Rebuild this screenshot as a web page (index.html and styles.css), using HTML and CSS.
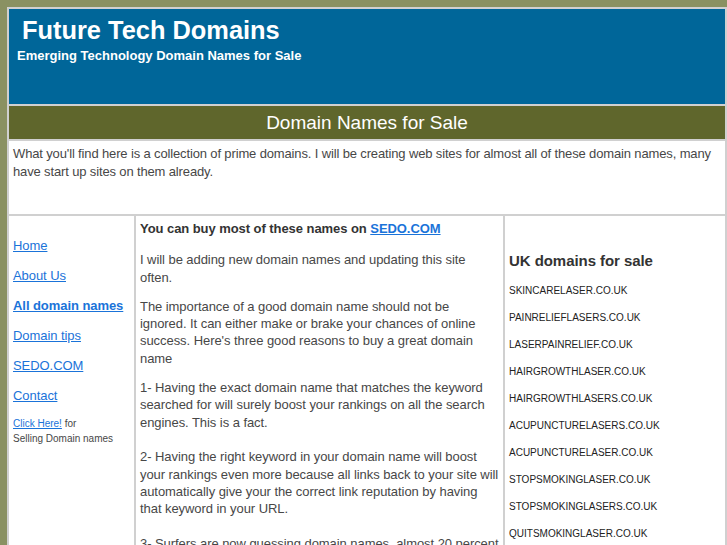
FILE: index.html
```html
<!DOCTYPE html>
<html lang="en">
<head>
    <meta charset="UTF-8">
    <title>Future Tech Domains</title>
    <link rel="stylesheet" href="styles.css">
</head>
<body>
    <div class="page">
        <div class="header">
            <h1>Future Tech Domains</h1>
            <div class="tagline">Emerging Technology Domain Names for Sale</div>
        </div>

        <div class="banner">Domain Names for Sale</div>

        <div class="intro">
            What you'll find here is a collection of prime domains. I will be creating web sites for almost all of these domain names, many have start up sites on them already.
        </div>

        <div class="columns">
            <div class="nav">
                <a href="#">Home</a>
                <a href="#">About Us</a>
                <a href="#" class="current">All domain names</a>
                <a href="#">Domain tips</a>
                <a href="#">SEDO.COM</a>
                <a href="#">Contact</a>
                <div class="small"><a href="#">Click Here!</a> for<br>Selling Domain names</div>
            </div>

            <div class="main">
                <p class="lead">You can buy most of these names on <a href="#">SEDO.COM</a></p>
                <p>I will be adding new domain names and updating this site often.</p>
                <p>The importance of a good domain name should not be ignored. It can either make or brake your chances of online success. Here's three good reasons to buy a great domain name</p>
                <p>1- Having the exact domain name that matches the keyword searched for will surely boost your rankings on all the search engines. This is a fact.<br><br>2- Having the right keyword in your domain name will boost your rankings even more because all links back to your site will automatically give your the correct link reputation by having that keyword in your URL.<br><br>3- Surfers are now guessing domain names, almost 20 percent of all traffic comes from type-in traffic.</p>
            </div>

            <div class="side">
                <h2>UK domains for sale</h2>
                <ul class="domains">
                    <li>SKINCARELASER.CO.UK</li>
                    <li>PAINRELIEFLASERS.CO.UK</li>
                    <li>LASERPAINRELIEF.CO.UK</li>
                    <li>HAIRGROWTHLASER.CO.UK</li>
                    <li>HAIRGROWTHLASERS.CO.UK</li>
                    <li>ACUPUNCTURELASERS.CO.UK</li>
                    <li>ACUPUNCTURELASER.CO.UK</li>
                    <li>STOPSMOKINGLASER.CO.UK</li>
                    <li>STOPSMOKINGLASERS.CO.UK</li>
                    <li>QUITSMOKINGLASER.CO.UK</li>
                    <li>QUITSMOKINGLASERS.CO.UK</li>
                </ul>
            </div>
        </div>
    </div>
</body>
</html>
```

FILE: styles.css
```css
html {
    background-color: #8a9162;
}
body {
    margin: 7px 0 0 7px;
    background-color: #8a9162;
    font-family: "Liberation Sans", Arial, sans-serif;
    font-size: 13px;
    color: #474747;
    letter-spacing: -0.06px;
}
.page {
    width: 720px;
    box-sizing: border-box;
    padding: 2px;
    background-color: #d0d0d0;
    display: flex;
    flex-direction: column;
    gap: 2px;
}
.header {
    background-color: #006699;
    height: 95px;
    color: #fff;
    box-sizing: border-box;
    padding: 6px 8px 0 8px;
    letter-spacing: 0;
}
.header h1 {
    margin: 0 0 0 5px;
    font-size: 25.4px;
    line-height: 30px;
}
.tagline {
    font-size: 13px;
    font-weight: bold;
    margin-top: 3px;
}
.banner {
    background-color: #5f662c;
    color: #fff;
    font-size: 19px;
    text-align: center;
    height: 33px;
    line-height: 33px;
    letter-spacing: 0;
}
.intro {
    background-color: #fff;
    height: 73px;
    box-sizing: border-box;
    padding: 4px 3px 4px 4px;
    line-height: 18px;
    letter-spacing: -0.14px;
}
.columns {
    display: flex;
    gap: 2px;
}
.nav {
    width: 125px;
    flex-shrink: 0;
    background-color: #fff;
    padding: 15px 0 0 4px;
    box-sizing: border-box;
    display: flex;
    flex-direction: column;
}
.nav a {
    color: #1a73d9;
    line-height: 30px;
}
.nav a.current {
    font-weight: bold;
}
.nav .small {
    font-size: 10px;
    line-height: 15px;
    margin-top: 5px;
    letter-spacing: 0;
}
.nav .small a {
    line-height: 15px;
}
.main {
    width: 367px;
    flex-shrink: 0;
    background-color: #fff;
    padding: 4px 4px;
    box-sizing: border-box;
    line-height: 17.3px;
}
.main p {
    margin: 0 0 12px 0;
}
.main .lead {
    font-weight: bold;
    color: #333;
    margin-bottom: 14px;
}
.main a {
    color: #1a73d9;
}
.side {
    flex: 1;
    background-color: #fff;
    padding: 0 4px;
}
.side h2 {
    font-size: 15px;
    color: #333;
    margin: 36px 0 0 0;
}
.domains {
    list-style: none;
    margin: 0;
    padding: 0;
    font-size: 10px;
    color: #222;
    letter-spacing: 0;
}
.domains li {
    margin-top: 17px;
    line-height: 9px;
}
.domains li + li {
    margin-top: 18px;
}
```
